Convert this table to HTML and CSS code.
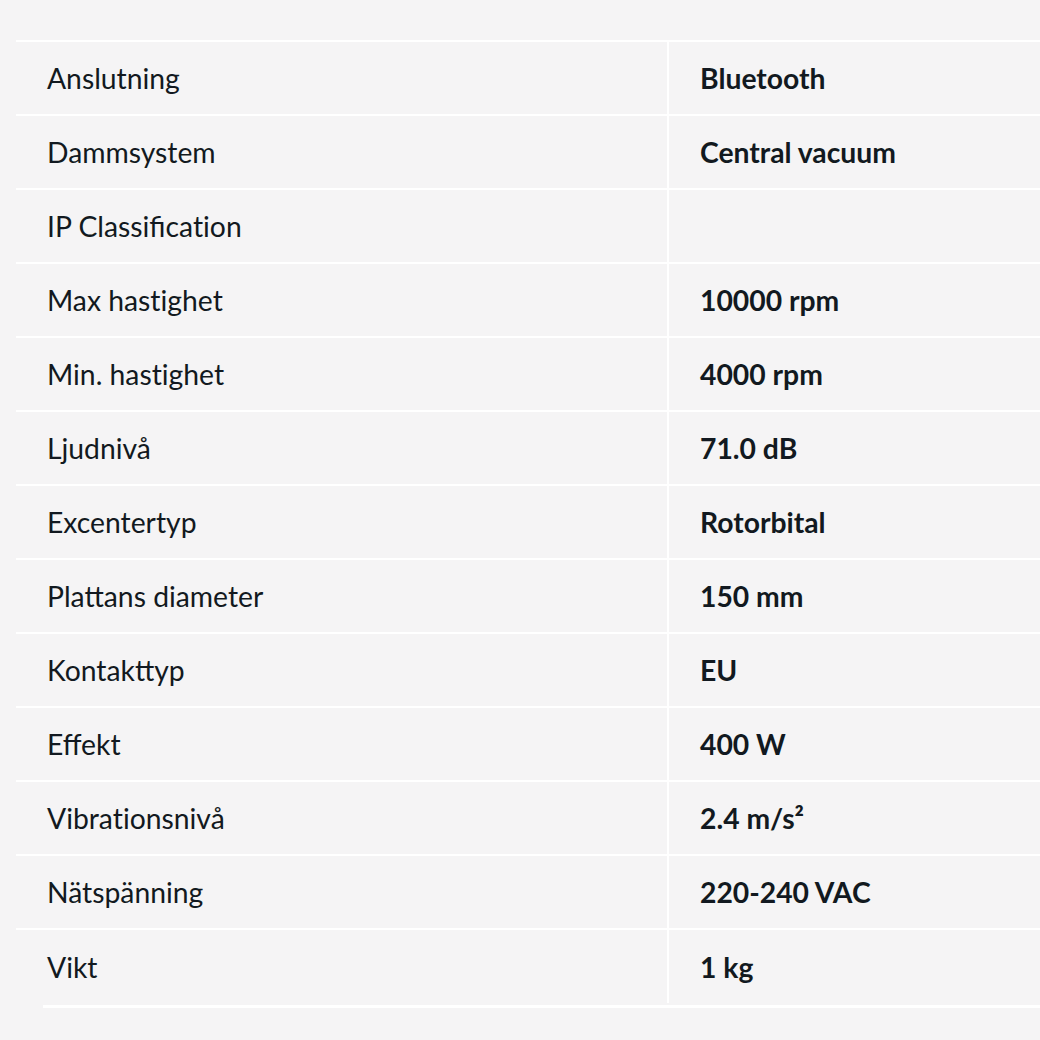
FILE: index.html
```html
<!DOCTYPE html>
<html lang="sv">
<head>
<meta charset="utf-8">
<title>Specifikationer</title>
<link rel="stylesheet" href="styles.css">
</head>
<body>
<div class="page">
  <table class="specs">
    <tbody>
      <tr><td class="label">Anslutning</td><td class="value">Bluetooth</td></tr>
      <tr><td class="label">Dammsystem</td><td class="value">Central vacuum</td></tr>
      <tr><td class="label">IP Classificat&zwnj;ion</td><td class="value"></td></tr>
      <tr><td class="label">Max hast&zwnj;ighet</td><td class="value">10000 rpm</td></tr>
      <tr><td class="label">Min. hast&zwnj;ighet</td><td class="value">4000 rpm</td></tr>
      <tr><td class="label">Ljudnivå</td><td class="value">71.0 dB</td></tr>
      <tr><td class="label">Excentertyp</td><td class="value">Rotorbital</td></tr>
      <tr><td class="label">Plattans diameter</td><td class="value">150 mm</td></tr>
      <tr><td class="label">Kontakttyp</td><td class="value">EU</td></tr>
      <tr><td class="label">Effekt</td><td class="value">400 W</td></tr>
      <tr><td class="label">Vibrat&zwnj;ionsnivå</td><td class="value">2.4 m/s²</td></tr>
      <tr><td class="label">Nätspänning</td><td class="value">220-240 VAC</td></tr>
      <tr><td class="label">Vikt</td><td class="value">1 kg</td></tr>
    </tbody>
  </table>
  <div class="bottom-rule"></div>
</div>
</body>
</html>
```

FILE: styles.css
```css
html, body {
  margin: 0;
  padding: 0;
  background: #f5f4f5;
  overflow: hidden;
}

.page {
  padding: 40px 0 0 16px;
  width: 1100px;
}

.specs {
  border-collapse: collapse;
  width: 1100px;
  font-family: Lato, "Open Sans", sans-serif;
  font-size: 28.3px;
  color: #121920;
}

.specs td {
  border-top: 2px solid #ffffff;
  height: 74px;
  padding: 0 0 0 31px;
  vertical-align: middle;
  box-sizing: border-box;
}

.specs .label {
  width: 652px;
  border-right: 2px solid #ffffff;
  font-weight: 400;
}

.specs .value {
  font-weight: 700;
}

.bottom-rule {
  margin: 2px 0 0 27px;
  height: 3px;
  background: #ffffff;
}
```
